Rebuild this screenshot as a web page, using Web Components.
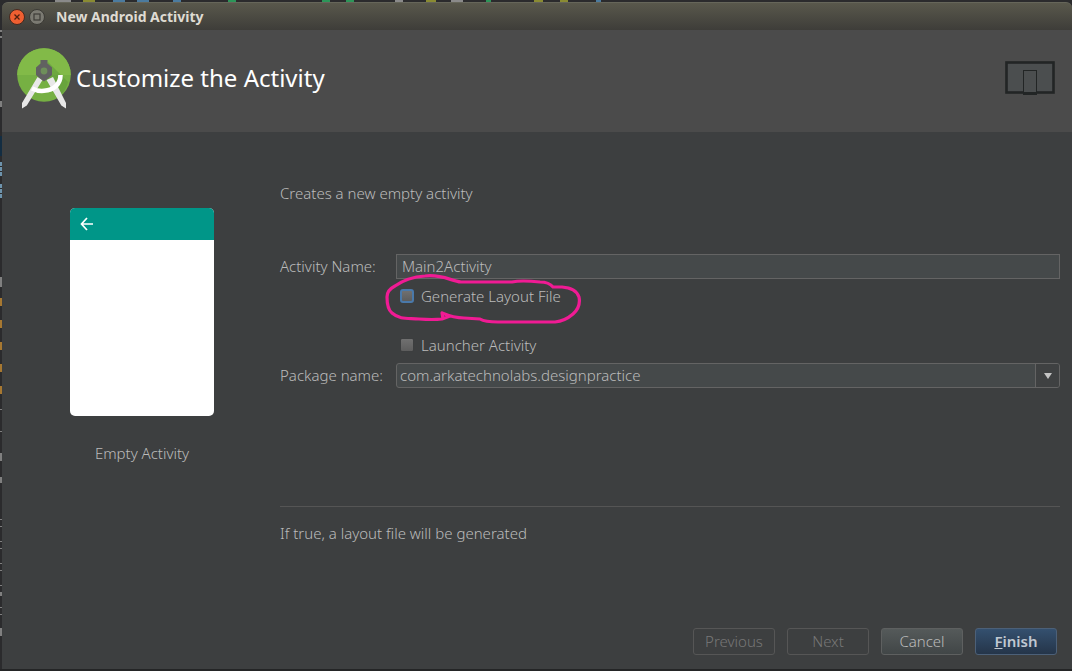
<!DOCTYPE html>
<html lang="en">
<head>
<meta charset="utf-8">
<title>New Android Activity</title>
<style>
html,body{margin:0;height:100%}
body{background:#2b2b2d;font-family:"Noto Sans","Open Sans",sans-serif;font-size:15px;color:#bbb}
</style>
</head>
<body>
<activity-wizard></activity-wizard>
<script>
function define(name, html) {
  const t = document.createElement('template');
  t.innerHTML = html;
  customElements.define(name, class extends HTMLElement {
    constructor() {
      super();
      this.attachShadow({ mode: 'open' }).append(t.content.cloneNode(true));
    }
  });
}

/* Window frame: title bar plus slotted content */
define('wizard-titlebar', `
<style>
:host{display:flex;align-items:center;gap:4px;height:28px;box-sizing:border-box;padding:0 7px;border-top:1px solid #66665a;border-radius:6px 6px 0 0;background:linear-gradient(#59584c,#3e3d39);color:#dfdbd2}
button{all:unset;display:block;width:16px;height:16px}
svg{display:block}
h1{margin:0 0 0 7px;font:700 14px/20px "Noto Sans","Open Sans",sans-serif}
</style>
<button aria-label="Close"><svg width="16" height="16" viewBox="0 0 16 16"><circle cx="8" cy="8" r="7.5" fill="#ef5f31" stroke="#45291f"/><path d="M5.5 5.5l5 5M10.5 5.5l-5 5" stroke="#50200f" stroke-width="1.3"/></svg></button>
<button aria-label="Maximize"><svg width="16" height="16" viewBox="0 0 16 16"><circle cx="8" cy="8" r="7.5" fill="#7b7a72" stroke="#3b3a35"/><rect x="5" y="5" width="6" height="6" fill="none" stroke="#3c3b37" stroke-width="1.2"/></svg></button>
<h1><slot></slot></h1>`);

define('wizard-header', `
<style>
:host{display:flex;align-items:center;justify-content:space-between;height:102px;box-sizing:border-box;padding:0 17px 6px 15px;background:#4b4b4b;color:#fff}
.brand{display:flex;align-items:center;gap:5px}
h2{margin:0;font:400 24px/32px "Noto Sans","Open Sans",sans-serif}
svg{display:block}
</style>
<div class="brand">
<svg width="54" height="62" viewBox="0 -1 54 62" aria-hidden="true">
<circle cx="27" cy="27" r="26.8" fill="#76b043"/><path d="M.2 27a26.8 26.8 0 0 1 53.6 0z" fill="#82ba48"/>
<path d="M31 14l20 20A26.8 26.8 0 0 1 40 50.5L28 30z" fill="#5f9c3a" opacity=".6"/>
<path d="M20.5 29L5 55V60.5L9.8 57.500 25.500 32zM36 29L49 55V60.500L44.300 57.500 29.500 32z" fill="#e8e8e8"/>
<path d="M15 40.500Q21 43.500 27 42.800C37 42 43.500 36 43.500 27" fill="none" stroke="#fff" stroke-width="4.600"/>
<path d="M23.500 12h7v3.500l4.500 4v7.500l-4 3.500-4 3-4-3-4-3.500v-7.500l4.500-4z" fill="#616161"/>
<circle cx="27" cy="23" r="3.400" fill="#6e8f5a"/>
</svg>
<h2><slot></slot></h2>
</div>
<svg width="50" height="34" viewBox="0 0 50 34" aria-hidden="true">
<rect x="1.500" y="1.500" width="47" height="30" fill="#4b4e4f" stroke="#222525" stroke-width="2.600"/>
<rect x="18.500" y="9.500" width="13" height="23" fill="#4b4e4f" stroke="#222525"/>
<path d="M18 32.500h14" stroke="#222525" stroke-width="3"/></svg>`);

define('template-preview', `
<style>
:host{display:block}
figure{margin:0}
.phone{height:208px;border-radius:5px;overflow:hidden;background:#fff}
.bar{display:flex;align-items:center;height:32px;padding-left:10px;background:#009688}
figcaption{margin-top:25px;line-height:24px;text-align:center;font-weight:300}
</style>
<figure><div class="phone"><div class="bar"><svg width="14" height="14" viewBox="0 0 14 14"><path d="M7 1L1.500 7 7 13M1.500 7H13" fill="none" stroke="#fff" stroke-width="1.700"/></svg></div></div>
<figcaption><slot></slot></figcaption></figure>`);

define('wizard-form', `
<style>
:host{display:block;font-weight:300}
p{margin:0;line-height:24px}
form{display:grid;grid-template-columns:116px 1fr;margin-top:49px}
form>label{line-height:25px}
.text,.combo{box-sizing:border-box;height:25px;border:1px solid #646464;background:#45494a}
.text{width:100%;padding:0 5px 1px;color:#bbb;font:inherit;outline:0;border-radius:0}
.check{grid-column:2;position:relative;display:flex;align-items:center;gap:7px;padding-left:4px;height:24px}
.generate{margin:5px 0 25px}
.launcher{margin-bottom:6px}
.check input{appearance:none;width:14px;height:14px;margin:0;border:1px solid #3c3e3f;border-radius:2px;background:linear-gradient(#707070,#5d5d5d)}
.check input.focus{border:2px solid #4a79aa;border-radius:3px}
.mark{position:absolute;left:-13px;top:-12px;pointer-events:none}
.combo{position:relative;border-radius:3px;overflow:hidden}
select{appearance:none;display:block;width:100%;height:23px;border:0;padding:0 28px 1px 3px;background:none;color:#bbb;font:inherit;outline:0}
.arrow{position:absolute;right:0;top:0;width:23px;height:23px;border-left:1px solid #646464;background:#3f4142;pointer-events:none;display:grid;place-items:center}
hr{margin:118px 0 14px;border:0;border-top:1px solid #555}
</style>
<p>Creates a new empty activity</p>
<form>
<label for="name">Activity Name:</label><input class="text" id="name" value="Main2Activity">
<div class="check generate"><input class="focus" type="checkbox" id="gen"><label for="gen">Generate Layout File</label>
<svg class="mark" width="200" height="54" viewBox="384 272 200 54"><path d="M426 276C411 277 403 281 396 286Q388 290 388 297Q388 309 393 313C401 320 409 318 420 319Q434 320 443 319L451 316L443 313L444 319M443 313Q455 318 465 318L481 319Q486 322 499 322H556Q566 321 574 314Q582 307 580 297Q577 288 563 287H554Q550 282 541 282Q522 280 513 282H462C452 281 443 274 426 276" fill="none" stroke="#f01b94" stroke-width="3.200" stroke-linejoin="round"/></svg></div>
<div class="check launcher"><input type="checkbox" id="launch"><label for="launch">Launcher Activity</label></div>
<label for="pkg">Package name:</label><div class="combo"><select id="pkg"><option>com.arkatechnolabs.designpractice</option></select><span class="arrow"><svg width="8" height="6" viewBox="0 0 8 6"><path d="M0 0h8L4 6z" fill="#c4c4c4"/></svg></span></div>
</form>
<hr>
<p>If true, a layout file will be generated</p>`);

define('wizard-button', `
<style>
:host{display:block;width:82px}
button{box-sizing:border-box;width:100%;height:27px;padding:0 0 2px;border:1px solid #5e6060;border-radius:3px;background:linear-gradient(#555a5a,#414647);color:#bbb;font:inherit;font-weight:300}
:host([off]) button{background:none;border-color:#565656;color:#777}
:host([primary]) button{background:linear-gradient(#34506f,#253549);border-color:#4c6078;color:#c0c8d2;font-weight:600}
</style>
<button type="button"><slot></slot></button>`);

/* Slivers of the editor window that show along the dialog's edges */
define('editor-edge', `
<style>:host{display:block;overflow:hidden}svg{display:block}:host([side]) .t,:host(:not([side])) .l{display:none}</style>
<svg class="t" width="1072" height="2"><path d="M55 1h16M395 1h8M451 1h12" stroke="#8a8a8a" stroke-width="2"/><path d="M83 1h12M426 1h10M534 1h9M560 1h8" stroke="#8a8b32" stroke-width="2"/><path d="M113 1h12M137 1h12M173 1h8M596 1h5" stroke="#4b7b9f" stroke-width="2"/><path d="M228 1h8M322 1h8M346 1h8M486 1h5" stroke="#2c9659" stroke-width="2"/></svg>
<svg class="l" width="2" height="667"><path d="M1 134v20" stroke="#132d42" stroke-width="2"/><path d="M1 160v14M1 182v14" stroke="#6e94ad" stroke-width="2" stroke-dasharray="4 1"/><path d="M1 296v8M1 318v8M1 340v8M1 362v8M1 384v8" stroke="#a77831" stroke-width="2"/><path d="M1 28v2M1 34v2M1 99v6M1 275v10M1 407v1M1 429v1M1 451v8M1 475v6M1 517v1M1 524v1M1 539v1M1 546v1M1 561v1M1 568v1M1 583v1M1 590v4M1 605v1M1 612v1M1 626v8" stroke="#808080" stroke-width="2"/></svg>`);

define('activity-wizard', `
<style>
:host{display:grid;grid-template:2px 1fr 2px/2px minmax(0,1fr);min-height:100vh}
.top{grid-column:1/3}
.window{display:flex;flex-direction:column;background:#3d3f40;border-radius:7px 7px 0 0}
.bottom{grid-column:1/3;background:#242526}
.body{flex:1;display:grid;grid-template-columns:144px minmax(0,1fr);gap:66px;padding:49px 12px 0 68px;align-items:start}
template-preview{margin-top:27px}
footer{display:flex;justify-content:flex-end;gap:12px;padding:0 15px 14px}
</style>
<editor-edge class="top"></editor-edge>
<editor-edge side></editor-edge>
<div class="window">
<wizard-titlebar>New Android Activity</wizard-titlebar>
<wizard-header>Customize the Activity</wizard-header>
<main class="body"><template-preview>Empty Activity</template-preview><wizard-form></wizard-form></main>
<footer><wizard-button off>Previous</wizard-button><wizard-button off>Next</wizard-button><wizard-button>Cancel</wizard-button><wizard-button primary><u>F</u>inish</wizard-button></footer>
</div>
<div class="bottom"></div>`);
</script>
</body>
</html>
